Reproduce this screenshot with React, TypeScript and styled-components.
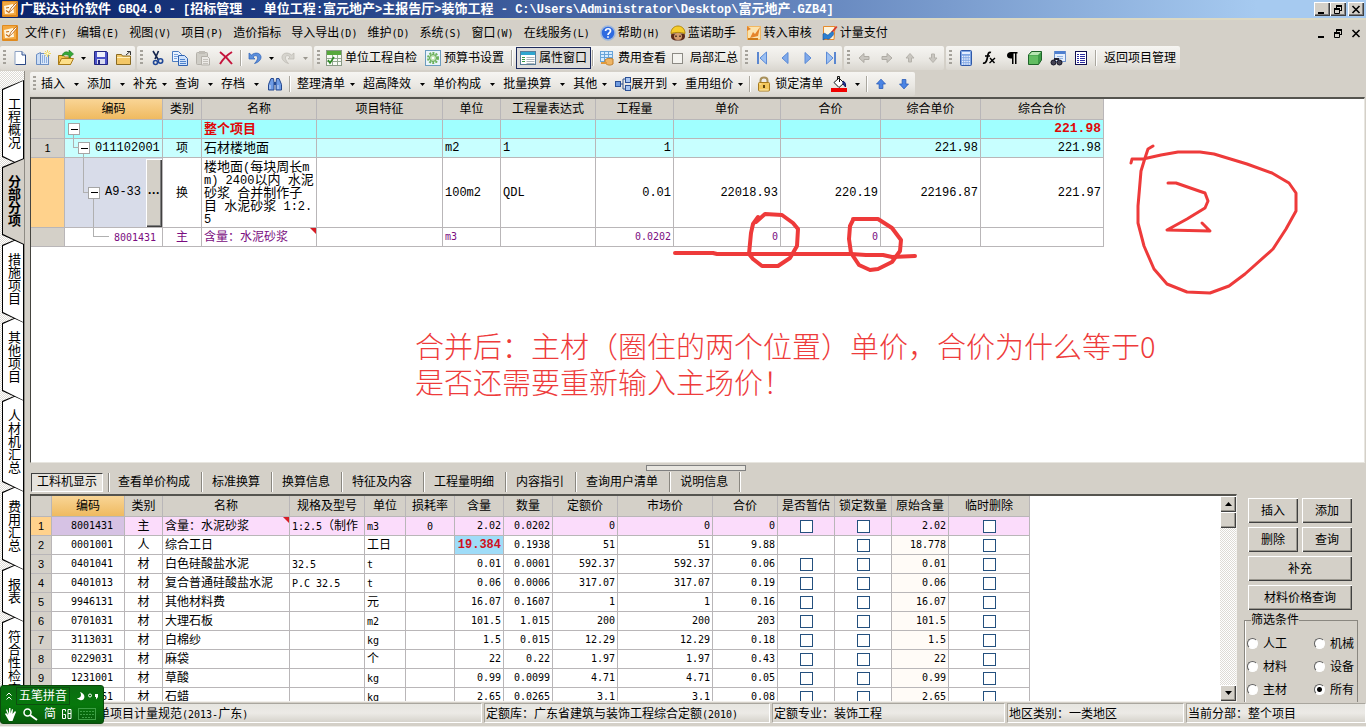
import React from 'react';
import styled, { createGlobalStyle, css } from 'styled-components';

const FACE = '#d4d0c8';
const LINE = '#b9b6b8';
const SANS = '"Liberation Sans", "Noto Sans CJK SC", sans-serif';
const MONO = '"Liberation Mono", "Noto Sans CJK SC", monospace';
const SMALL_MONO = '"DejaVu Sans Mono", "Noto Sans CJK SC", monospace';

const Global = createGlobalStyle`
  * { box-sizing: border-box; }
  body { margin: 0; background: ${FACE}; color: #000; font: 12px/16px ${SANS}; }
  button, input { font: inherit; color: inherit; margin: 0; padding: 0; }
  svg { display: block; flex: none; }
`;

/* ---------- text ---------- */

const Latin = styled.span<{ $size: number }>`
  font-family: ${p => (p.$size > 10 ? MONO : SMALL_MONO)};
  font-size: ${p => p.$size}px;
  line-height: 1px;
  white-space: pre;
`;

/* Sets the Latin runs of a mixed string in a half-width face. */
function Mix({ children, size = 10 }: { children: string; size?: number }) {
  const runs = children.match(/[\x20-\x7e]+|[^\x20-\x7e]+/g) || [];
  return (
    <>
      {runs.map((r, i) =>
        /^[\x20-\x7e]/.test(r) ? <Latin key={i} $size={size}>{r}</Latin> : <React.Fragment key={i}>{r}</React.Fragment>
      )}
    </>
  );
}

/* ---------- icons ---------- */

const Svg = ({ children, s = 16 }: { children: React.ReactNode; s?: number }) => (
  <svg width={s} height={s} viewBox="0 0 16 16" fill="none" aria-hidden="true">{children}</svg>
);

const icons: Record<string, React.ReactNode> = {
  app: (
    <Svg>
      <rect x="0" y="0" width="16" height="16" rx="1" fill="#e08a1e" />
      <rect x="1" y="1" width="13" height="13" fill="#f3a840" />
      <path d="M2 5l9-2 1 9-9 1z" fill="#fff6e0" />
      <path d="M4 7l3-.500M4 9.500l3 2" stroke="#c46a10" strokeWidth="1.200" />
      <path d="M14.500 1.500L9 7l-2 4.500 3.500-3L15 3z" fill="#fff" stroke="#b85f0c" strokeWidth=".8" />
    </Svg>
  ),
  page: (
    <Svg>
      <path d="M3 1.500h7l3.500 3.500v9.500H3z" fill="#fdfeff" stroke="#8ba0c2" />
      <path d="M10 1.500v3.500h3.500" fill="#d5e2f5" stroke="#36558f" />
      <path d="M13.500 5v9.500H4" stroke="#2d4a86" />
    </Svg>
  ),
  sheets: (
    <Svg>
      <path d="M1.500 4.500l4-2v12h-4z" fill="#c9dcf5" stroke="#6c8fc4" />
      <rect x="5.500" y="3.500" width="8" height="11" fill="#dbe8fa" stroke="#6c8fc4" />
      <path d="M7.500 5v8M9.500 5v8M11.500 7v6" stroke="#8fb0de" />
      <path d="M12.500 0v7M9 3.500h7M10 1l5 5M15 1l-5 5" stroke="#f1d860" />
      <rect x="11.500" y="2.500" width="2" height="2" fill="#fffbe0" />
    </Svg>
  ),
  open: (
    <Svg>
      <path d="M.500 5.500h5l1 1.500h6v7.500H.500z" fill="#f3c24e" stroke="#a97a16" />
      <path d="M.500 14.500l3-6h12l-3 6z" fill="#fde08a" stroke="#a97a16" />
      <path d="M4 6c1-4 4-5 7-3.500V0l4.500 4L11 8V5.500C8 4 6 5 4 6z" fill="#35a838" stroke="#1c7a22" strokeWidth=".6" />
    </Svg>
  ),
  save: (
    <Svg>
      <path d="M1.500 1.500h12l1 1v12h-13z" fill="#4b52c8" stroke="#23267f" />
      <rect x="4" y="2" width="8" height="5" fill="#eef0fb" />
      <rect x="4" y="9" width="8" height="5" fill="#d9dcf0" />
      <rect x="5" y="10" width="2" height="4" fill="#23267f" />
    </Svg>
  ),
  folderUp: (
    <Svg>
      <path d="M.500 4.500h5l1 1.500h8v8.500H.500z" fill="#f3c766" stroke="#8a6a22" />
      <path d="M1 7.500h13" stroke="#fff0bd" />
      <path d="M10 5l4-3.500M11 1.500h3.500V5" stroke="#333" />
    </Svg>
  ),
  cut: (
    <Svg>
      <path d="M4 1l5.500 9M9.500 1L6 9" stroke="#16264e" strokeWidth="1.600" />
      <circle cx="11.500" cy="11" r="2.200" stroke="#1f4797" strokeWidth="1.600" />
      <circle cx="6.500" cy="12.500" r="2" stroke="#1f4797" strokeWidth="1.600" />
    </Svg>
  ),
  copy: (
    <Svg>
      <path d="M.500 1.500h6l3 3v7h-9z" fill="#eaf3ff" stroke="#4d7cc0" />
      <path d="M2 4.500h4M2 6.500h4M2 8.500h3" stroke="#7ba3dd" />
      <path d="M6.500 5.500h6l3 3v7H6.500z" fill="#cfe2fb" stroke="#2f62b0" />
      <path d="M8 9.500h5M8 11.500h6M8 13.500h6" stroke="#4f83cc" />
    </Svg>
  ),
  paste: (
    <Svg>
      <rect x="1.500" y="2.500" width="11" height="12" rx="1" fill="#cfcdc6" stroke="#b4b1aa" />
      <rect x="4" y="1" width="6" height="3" fill="#bfbcb5" />
      <path d="M6.500 6.500h6l2 2v6.500h-8z" fill="#eceae6" stroke="#b4b1aa" />
      <path d="M8 9.500h5M8 11.500h5M8 13.500h5" stroke="#c4c1bb" />
    </Svg>
  ),
  remove: <Svg><path d="M2 2c4 3 8 7 12 12M14 2C9 5 5 9 2 14" stroke="#c5143c" strokeWidth="2" /></Svg>,
  undo: <Svg><path d="M2 3v6h6L6 7c2-2 4-1.500 4.500 0s-.5 4-3 6.500c4-1 7-4 6.500-7C13 2.500 8 2 4.500 5z" fill="#5b8fdc" stroke="#2f62b5" strokeWidth=".7" /></Svg>,
  redo: <Svg><path d="M14 3v6H8l2-2c-2-2-4-1.500-4.500 0s.5 4 3 6.500c-4-1-7-4-6.500-7C3 2.500 8 2 11.500 5z" fill="#d6d4ce" stroke="#bab7b0" strokeWidth=".7" /></Svg>,
  check: (
    <Svg>
      <rect x=".5" y=".5" width="15" height="15" fill="#f8fbf6" stroke="#8a9a86" />
      <rect x="1" y="1" width="14" height="4" fill="#56a83c" />
      <path d="M1 8.500h14M1 11.500h14M6.500 5v10M11.500 5v10" stroke="#93a890" />
      <path d="M2 10l2 3 4-6" stroke="#2c8a24" strokeWidth="1.600" />
    </Svg>
  ),
  gear: (
    <Svg>
      <rect x=".5" y=".5" width="15" height="15" fill="#e9f4fb" stroke="#6d9dbf" />
      <circle cx="8" cy="8" r="5" stroke="#6cb35b" strokeWidth="2" strokeDasharray="2 1.200" />
      <circle cx="8" cy="8" r="3.500" fill="#bfe4b2" stroke="#5ba24b" />
      <circle cx="8" cy="8" r="1.300" fill="#fff" />
    </Svg>
  ),
  props: (
    <Svg>
      <rect x=".5" y="1.500" width="15" height="13" fill="#fff" stroke="#5a7e9a" />
      <rect x="1" y="2" width="14" height="3" fill="#2fa6cf" />
      <path d="M2 7.500h3M2 9.500h3M2 11.500h3" stroke="#3c9a46" />
      <path d="M6.500 7.500h8M6.500 9.500h8M6.500 11.500h8M6.500 13.500h8" stroke="#aab4ba" />
    </Svg>
  ),
  fee: (
    <Svg>
      <rect x="1.500" y="1.500" width="12" height="10" fill="#d6ecff" stroke="#68a4d8" />
      <path d="M1.500 4.500h12M1.500 7.500h12M5.500 1.500v10M9.500 1.500v10" stroke="#68a4d8" />
      <path d="M6 10c2-2 5-2 8-1v5c-3 2-6 1-8-1z" fill="#eeb565" stroke="#c07f2c" />
      <path d="M2 13h6" stroke="#e09a3c" strokeWidth="2" />
    </Svg>
  ),
  first: <Svg><path d="M4 2v12" stroke="#5b87d0" strokeWidth="2" /><path d="M12.500 2v12L6 8z" fill="#9cc0f2" stroke="#5b8ad6" /></Svg>,
  prev: <Svg><path d="M11 2.500v11L5 8z" fill="#7fa9ea" stroke="#5b8ad6" /></Svg>,
  next: <Svg><path d="M5 2.500v11L11 8z" fill="#7fa9ea" stroke="#5b8ad6" /></Svg>,
  last: <Svg><path d="M12 2v12" stroke="#5b87d0" strokeWidth="2" /><path d="M3.500 2v12L10 8z" fill="#9cc0f2" stroke="#5b8ad6" /></Svg>,
  gLeft: <Svg><path d="M3 8l5-4.500v3h5v3H8v3z" fill="#c9c6c0" stroke="#aeaba4" /></Svg>,
  gRight: <Svg><path d="M13 8L8 3.500v3H3v3h5v3z" fill="#c9c6c0" stroke="#aeaba4" /></Svg>,
  gUp: <Svg><path d="M8 3.500L12 8H9.500v4h-3V8H4z" fill="#c9c6c0" stroke="#b5b2ab" /></Svg>,
  gDown: <Svg><path d="M8 12.500L4 8h2.500V4h3v4H12z" fill="#c9c6c0" stroke="#b5b2ab" /></Svg>,
  calc: (
    <Svg>
      <rect x="2.500" y=".5" width="11" height="15" rx="1" fill="#7fa6e4" stroke="#3059a8" />
      <rect x="4" y="2" width="8" height="2" fill="#e3eeff" />
      <path d="M4 6.500h8M4 9h8M4 11.500h8M4 14h8" stroke="#f4f8ff" strokeWidth="1.300" strokeDasharray="1.300 .9" />
    </Svg>
  ),
  fx: (
    <Svg>
      <path d="M10 2.500C7.500 1.500 7 4 6.500 7S5 14 2 13" stroke="#000" strokeWidth="1.700" />
      <path d="M4 6h5M9 8l4.500 5M14 8l-5.500 5" stroke="#000" strokeWidth="1.400" />
    </Svg>
  ),
  para: <Svg><path d="M7 2H13.500V3.500H12.500V14H11V3.500H9.500V14H8V8.500C5 9 3 7.500 3 5.500S4.500 2 7 2z" fill="#000" /></Svg>,
  cube: (
    <Svg>
      <path d="M1.500 5l3-3.500h10v8.500l-3 4.500h-10z" fill="#3d9c46" stroke="#1f6429" />
      <path d="M2 5l3-3h9l-3 3z" fill="#b7e6b2" />
      <rect x="2" y="5.500" width="9" height="8.500" fill="#62bd62" />
    </Svg>
  ),
  find: (
    <Svg>
      <rect x="4.500" y="1.500" width="11" height="10" fill="#e6f0fd" stroke="#6f93cc" />
      <rect x="5" y="1" width="10" height="3" fill="#4f80d0" />
      <path d="M7 6.500h6M7 8.500h6" stroke="#94b4e2" />
      <circle cx="3.500" cy="12.500" r="2.500" fill="#445" stroke="#112" />
      <circle cx="9.500" cy="12.500" r="2.500" fill="#445" stroke="#112" />
      <path d="M4 9h5" stroke="#223" strokeWidth="2" />
    </Svg>
  ),
  list: (
    <Svg>
      <rect x="2.500" y="1.500" width="11" height="13" fill="#fff" stroke="#101050" />
      <path d="M4 4.500h2M4 6.500h2M4 8.500h2M4 10.500h2M4 12.500h2M7 4.500h5M7 6.500h5M7 8.500h5M7 10.500h5M7 12.500h5" stroke="#2a2aa0" />
    </Svg>
  ),
  binoc: (
    <Svg>
      <path d="M4 2.500h2.500l.5 4v7.500H1.500V8.500zM9.500 2.500H12l2.500 6V14H9V6.500z" fill="#6e9be4" stroke="#26498f" />
      <path d="M7 6h2v3H7z" fill="#26498f" />
      <path d="M3 9v4M11 9v4" stroke="#cfe0fb" />
    </Svg>
  ),
  expand: (
    <Svg>
      <path d="M5 8h3M8 3v10M8 3h3M8 13h3" stroke="#35558c" />
      <rect x=".5" y="5.500" width="5" height="5" fill="#6f9be0" stroke="#2b5096" />
      <rect x="10.500" y="1.500" width="5" height="5" fill="#a9c6f1" stroke="#2b5096" />
      <rect x="10.500" y="9.500" width="5" height="5" fill="#a9c6f1" stroke="#2b5096" />
    </Svg>
  ),
  lock: (
    <Svg>
      <path d="M4.500 8V4.500c0-4 7-4 7 0V8" stroke="#a8905a" strokeWidth="2" />
      <rect x="2.500" y="6.500" width="11" height="8.500" rx="1" fill="#f2c75c" stroke="#a87a1c" />
      <path d="M8 9v3" stroke="#5c420c" strokeWidth="2" />
      <path d="M3.500 8h2M3.500 14h9" stroke="#fdebb0" />
    </Svg>
  ),
  paint: (
    <Svg>
      <path d="M3 6.500L8 2l5 5-5 4.500z" fill="#fff" stroke="#111" />
      <path d="M6.500 4V.500h2V6" stroke="#111" />
      <path d="M12 5c2 1 3 3 2.500 6L12 8z" fill="#27399a" stroke="#101c66" />
      <rect x="0" y="12" width="16" height="4" fill="#f00000" />
    </Svg>
  ),
  up: <Svg s={12}><path d="M8 1.500L14 8h-3.500V14h-5V8H2z" fill="#4a84e4" stroke="#2355b4" /></Svg>,
  down: <Svg s={12}><path d="M8 14.500L2 8h3.500V2h5v6H14z" fill="#4a84e4" stroke="#2355b4" /></Svg>,
  help: (
    <Svg>
      <circle cx="8" cy="8" r="7" fill="#2f6be0" stroke="#9fb8dc" strokeWidth="1.500" />
      <path d="M5.500 6c.3-3 5-3 5 0 0 1.800-2.500 2-2.500 4M8 11.300v1.500" stroke="#fff" strokeWidth="1.700" />
    </Svg>
  ),
  worker: (
    <Svg>
      <path d="M1.500 8.500C0 13 2 15 5.500 15.500h5c3.500-.5 5.500-2.500 4-7z" fill="#5d2a1a" />
      <ellipse cx="8" cy="11.500" rx="4" ry="3.500" fill="#d39a6c" />
      <path d="M1 8.500c0-10 14-10 14 0-4-1.500-10-1.500-14 0z" fill="#f5cc2c" stroke="#b58a0c" />
      <path d="M6 10.500v1.500M10 10.500v1.500" stroke="#22110a" strokeWidth="1.300" />
    </Svg>
  ),
  transfer: (
    <Svg>
      <rect x="1.500" y="1.500" width="13" height="13" fill="#fbe3ae" stroke="#f3b860" />
      <path d="M1 1l4 3-4 2zM4 13l3-6 2 2 5-7-2 9-4 1z" fill="#e5852a" />
      <path d="M2 14h10" stroke="#cf7b17" strokeWidth="2" />
    </Svg>
  ),
  pay: (
    <Svg>
      <path d="M1.500 1.500H13l-1 13H1.500z" fill="#fdf4dd" stroke="#e58a2c" />
      <path d="M9 7l5-6 1.500 1-5 6z" fill="#d93a2b" />
      <path d="M1 9c2-2 3 1 5 1 2-1 3-4 5-3 2 2-1 5-4 7-2 1-2-2-6 1z" fill="#2c7fd0" stroke="#174f94" strokeWidth=".6" />
    </Svg>
  ),
};

const Glyph = ({ kind }: { kind: 'min' | 'restore' | 'close' }) => (
  <svg width="10" height="9" viewBox="0 0 10 9" fill="none" stroke="#000" aria-hidden="true">
    {kind === 'min' && <path d="M1 8h6" strokeWidth="2" />}
    {kind === 'restore' && (
      <>
        <path d="M3 1h6M1 4h6" strokeWidth="2" />
        <path d="M3.500 1v2M8.500 1v5M7 5.500h2M1.500 4v4.500h5V4" />
      </>
    )}
    {kind === 'close' && <path d="M1.500 1l7 7M8.500 1l-7 7" strokeWidth="1.600" />}
  </svg>
);

/* ---------- window chrome ---------- */

const Window = styled.div`
  display: flex;
  flex-direction: column;
  height: 100vh;
  overflow: hidden;
  position: relative;
`;

const TitleBar = styled.header`
  display: flex;
  align-items: center;
  height: 18px;
  padding: 0 2px;
  background: linear-gradient(90deg, #0a246a 0%, #1c3a80 20%, #6384bc 58%, #a6caf0 92%);
`;

const Title = styled.h1`
  flex: 1;
  margin: 0 0 0 2px;
  color: #fff;
  font-size: 13px;
  line-height: 18px;
  white-space: nowrap;
`;

const WinButtons = styled.div`
  display: flex;
`;

const WinButton = styled.button<{ $flat?: boolean; $apart?: boolean }>`
  display: flex;
  align-items: center;
  justify-content: center;
  width: 16px;
  height: 14px;
  margin-left: ${p => (p.$apart ? 2 : 0)}px;
  background: ${FACE};
  border: 0;
  ${p => !p.$flat && css`box-shadow: inset 1px 1px #fff, inset -1px -1px #404040, inset -2px -2px #808080;`}
`;

const WindowControls = ({ flat }: { flat?: boolean }) => (
  <WinButtons>
    <WinButton $flat={flat} aria-label="最小化"><Glyph kind="min" /></WinButton>
    <WinButton $flat={flat} aria-label="还原"><Glyph kind="restore" /></WinButton>
    <WinButton $flat={flat} $apart aria-label="关闭"><Glyph kind="close" /></WinButton>
  </WinButtons>
);

const MenuBar = styled.nav`
  display: flex;
  align-items: center;
  height: 28px;
  padding: 0 2px;
  border-top: 2px solid #dcd9c4;
`;

const MenuItems = styled.div`
  display: flex;
  flex: 1;
  padding-left: 2px;
`;

const MenuItem = styled.button`
  display: flex;
  align-items: center;
  gap: 2px;
  height: 20px;
  padding: 0 5px;
  background: none;
  border: 0;
  white-space: nowrap;
`;

/* ---------- tool bars ---------- */

const ToolRow = styled.div<{ $second?: boolean }>`
  display: flex;
  flex: none;
  height: 25px;
  gap: 2px;
  ${p => p.$second && css`height: 26px; padding: 1px 0 0 5px;`}
`;

const ToolGroup = styled.div`
  display: flex;
  align-items: center;
  height: 24px;
  background: linear-gradient(#f6f5f2, #e9e7e2 60%, #dad7d0);
  border-radius: 2px;
`;

const Grip = styled.span`
  width: 3px;
  height: 16px;
  margin: 0 2px 0 3px;
  background: repeating-linear-gradient(#a5a29b 0 2px, transparent 2px 4px);
`;

const Tool = styled.button<{ $w?: number; $on?: boolean }>`
  display: flex;
  align-items: center;
  justify-content: ${p => (p.$w ? 'center' : 'flex-start')};
  gap: 3px;
  height: 22px;
  width: ${p => (p.$w ? p.$w + 'px' : 'auto')};
  padding: 0 ${p => (p.$w ? 0 : 4)}px;
  background: none;
  border: 0;
  white-space: nowrap;
  ${p => p.$on && css`
    padding: 0 3px;
    background: #dddcdb;
    border: 1px solid #1c2a5c;
  `}
`;

const DropTool = styled(Tool)<{ $tight?: boolean }>`
  padding: 0 0 0 3px;
  gap: ${p => (p.$tight ? 0 : 4)}px;
`;

const Divider = styled.span<{ $narrow?: boolean }>`
  width: 2px;
  height: 16px;
  margin: 0 ${p => (p.$narrow ? 1 : 3)}px;
  border-left: 1px solid #aaa79f;
  border-right: 1px solid #fff;
`;

const CaretBox = styled.span<{ $w: number; $dim?: boolean }>`
  display: flex;
  justify-content: center;
  width: ${p => p.$w}px;
  color: ${p => (p.$dim ? '#9a978f' : '#000')};
`;

const Caret = ({ w = 15, dim }: { w?: number; dim?: boolean }) => (
  <CaretBox $w={w} $dim={dim}>
    <svg width="5" height="3" viewBox="0 0 5 3" aria-hidden="true"><path d="M0 0h5L2.500 3z" fill="currentColor" /></svg>
  </CaretBox>
);

const CheckLabel = styled.label`
  display: flex;
  align-items: center;
  gap: 7px;
  padding: 0 2px;
`;

const Tick = styled.input<{ $plain?: boolean }>`
  appearance: none;
  display: block;
  width: 13px;
  height: 13px;
  margin: 0 auto;
  background: #fff;
  border: 1px solid #24507e;
  ${p => p.$plain && css`width: 11px; height: 11px; margin: 0; border-color: #8c8a84; background: #f4f3ef;`}
`;

const IconTool = ({ name, w = 23 }: { name: string; w?: number }) => (
  <Tool $w={w} aria-label={name}>{icons[name]}</Tool>
);

const Drop = ({ label, tight }: { label: string; tight?: boolean }) => (
  <DropTool $tight={tight}>{label}<Caret /></DropTool>
);

/* ---------- left page tabs ---------- */

const Body = styled.div`
  display: flex;
  flex: 1;
  min-height: 0;
`;

const Strip = styled.nav`
  flex: none;
  width: 25px;
  padding: 9px 1px 0 2px;
  overflow: hidden;
  background: repeating-conic-gradient(#fff 0 25%, #dedbd5 0 50%) 0 0 / 2px 2px;
  border-right: 1px solid #8e8b84;
`;

const PageTab = styled.button<{ $z: number; $on?: boolean }>`
  position: relative;
  z-index: ${p => (p.$on ? 20 : p.$z)};
  display: block;
  width: 22px;
  margin-bottom: -9px;
  padding: 17px 0 18px;
  border: 0;
  background: #000;
  clip-path: polygon(0 9px, 100% 0, 100% 100%, 0 calc(100% - 10px));
  &::before {
    content: '';
    position: absolute;
    inset: 1px ${p => (p.$on ? 0 : 1)}px 1px 1px;
    background: ${p => (p.$on ? FACE : '#fff')};
    clip-path: polygon(0 9px, 100% 0, 100% 100%, 0 calc(100% - 10px));
  }
  span {
    position: relative;
    display: block;
    writing-mode: vertical-rl;
    margin: 0 auto;
    width: 22px;
    font-size: 13px;
    line-height: 22px;
    font-weight: ${p => (p.$on ? 700 : 400)};
  }
`;

/* ---------- work area ---------- */

const Main = styled.main`
  display: flex;
  flex-direction: column;
  flex: 1;
  min-width: 0;
`;

const UpperPane = styled.section`
  position: relative;
  flex: 1;
  min-height: 0;
  margin: 0 1px 0 5px;
  overflow: hidden;
  background: #fff;
  border: 1px solid #45443f;
  border-top-width: 2px;
  border-top-color: #55544f;
  border-right-color: #e8e6e0;
  border-bottom-color: #e8e6e0;
`;

const Grid = styled.table`
  table-layout: fixed;
  width: 0;
  border-spacing: 0;
  th, td {
    height: 19px;
    padding: 0 2px;
    border-right: 1px solid ${LINE};
    border-bottom: 1px solid ${LINE};
    overflow: hidden;
    white-space: nowrap;
    line-height: 16px;
    text-align: left;
    font-weight: 400;
  }
  thead th {
    height: 21px;
    padding: 0;
    background: ${FACE};
    text-align: center;
  }
  thead th.hot { background: linear-gradient(#f9d596, #efba60); }
`;

const Row = styled.tr<{ $bg?: string; $ink?: string; $tall?: boolean }>`
  color: ${p => p.$ink || '#000'};
  background: ${p => p.$bg || '#fff'};
  ${p => p.$tall && css`td, th { height: 70px !important; }`}
`;

const NumHead = styled.th<{ $hot?: boolean }>`
  && { text-align: center; font-size: 11px; background: ${p => (p.$hot ? '#ffd28c' : FACE)}; color: #000; }
`;

const Cell = styled.td<{ $align?: string; $size?: number; $bold?: boolean; $bg?: string; $flag?: boolean; $font?: string }>`
  && {
    position: relative;
    text-align: ${p => p.$align || 'left'};
    font-size: ${p => p.$size || 12}px;
    font-weight: ${p => (p.$bold ? 700 : 400)};
    background: ${p => p.$bg || 'transparent'};
    font-family: ${p => p.$font || SANS};
  }
  ${p => p.$flag && css`
    &::after {
      content: '';
      position: absolute;
      top: 0;
      right: 0;
      border: 3px solid #d81c24;
      border-left-color: transparent;
      border-bottom-color: transparent;
    }
  `}
`;

const CodeCell = styled.td<{ $indent: number; $bg?: string }>`
  && {
    position: relative;
    padding: 0 0 0 ${p => p.$indent}px;
    background: ${p => p.$bg || 'transparent'};
  }
`;

const CodeLine = styled.div`
  display: flex;
  align-items: center;
  gap: 5px;
`;

const Toggle = styled.button`
  display: flex;
  align-items: center;
  justify-content: center;
  flex: none;
  width: 12px;
  height: 12px;
  background: #fff;
  border: 1px solid #a5a5a5;
  &::before { content: ''; width: 7px; height: 1px; background: #000; }
`;

const Elbow = styled.span<{ $x: number; $w: number }>`
  position: absolute;
  top: 0;
  left: ${p => p.$x}px;
  width: ${p => p.$w}px;
  height: 50%;
  border-left: 1px solid #b0b0b0;
  border-bottom: 1px solid #b0b0b0;
`;

const Stem = styled.span<{ $x: number }>`
  position: absolute;
  top: calc(50% + 6px);
  bottom: 0;
  left: ${p => p.$x}px;
  border-left: 1px solid #b0b0b0;
`;

const MoreButton = styled.button`
  position: absolute;
  top: 1px;
  right: 0;
  bottom: 0;
  width: 16px;
  background: ${FACE};
  border: 0;
  font-weight: 700;
  box-shadow: inset 1px 1px #fff, inset -1px -1px #404040, inset -2px -2px #808080;
`;

const NameLines = styled.div`
  font-size: 13px;
  line-height: 13px;
  white-space: nowrap;
`;

const Marks = styled.svg`
  position: absolute;
  top: 0;
  left: 0;
  pointer-events: none;
`;

const Note = styled.p`
  position: absolute;
  top: 228px;
  left: 384px;
  margin: 0;
  color: #ee3b3b;
  font: 300 29px/36px "Noto Sans CJK SC", sans-serif;
  white-space: nowrap;
`;

const Splitter = styled.div`
  display: flex;
  justify-content: center;
  flex: none;
  height: 9px;
  padding-top: 2px;
  span {
    width: 100px;
    height: 6px;
    background: #e8e6e0;
    border: 1px solid #808080;
  }
`;

const DetailTabs = styled.div`
  display: flex;
  align-items: center;
  flex: none;
  height: 22px;
  padding: 0 0 2px 6px;
`;

const DetailTab = styled.button<{ $on?: boolean }>`
  height: 20px;
  padding: 0 11px 0 10px;
  background: none;
  border: 0;
  border-right: 1px solid #8a8780;
  box-shadow: 1px 0 #fff;
  white-space: nowrap;
  ${p => p.$on && css`
    height: 19px;
    padding: 0 5px;
    margin-right: 5px;
    background: #e6e3dd;
    border: 1px solid #404040;
    border-right-color: #fff;
    border-bottom-color: #fff;
    box-shadow: 5px 0 ${FACE}, 6px 0 #8a8780, 7px 0 #fff;
  `}
`;

const Lower = styled.section`
  display: flex;
  flex: none;
  height: 208px;
  padding-left: 5px;
`;

const LowerGrid = styled.div`
  display: flex;
  flex: 1;
  min-width: 0;
  background: #fff;
  border: 1px solid #45443f;
  border-top: 2px solid #55544f;
  border-right-color: #f2f0ec;
  border-bottom-color: #f2f0ec;
`;

const GridPort = styled.div`
  flex: 1;
  min-width: 0;
  overflow: hidden;
`;

const ScrollBar = styled.div`
  display: flex;
  flex-direction: column;
  justify-content: space-between;
  flex: none;
  width: 16px;
  background: repeating-conic-gradient(#fff 0 25%, #dedbd5 0 50%) 0 0 / 2px 2px;
`;

const raised = css`
  background: ${FACE};
  border: 0;
  box-shadow: inset 1px 1px #fff, inset -1px -1px #404040, inset -2px -2px #9a978f;
`;

const ScrollPart = styled.button`
  ${raised}
  display: flex;
  align-items: center;
  justify-content: center;
  width: 16px;
  height: 16px;
`;

const Side = styled.aside`
  flex: none;
  width: 129px;
  padding: 4px 8px 0 7px;
  overflow: hidden;
`;

const PushGrid = styled.div`
  display: grid;
  grid-template-columns: 1fr 1fr;
  gap: 4px;
  padding: 0 6px 0 4px;
`;

const Push = styled.button<{ $wide?: boolean }>`
  ${raised}
  height: 25px;
  ${p => p.$wide && css`grid-column: span 2;`}
`;

const Filter = styled.fieldset`
  display: grid;
  grid-template-columns: 67px 1fr;
  grid-auto-rows: 23px;
  align-items: center;
  height: 100px;
  align-content: start;
  margin: 2px 0 0;
  padding: 4px 0 0;
  border: 1px solid #8a8780;
  box-shadow: inset 1px 0 #fff;
  legend { margin-left: 6px; padding: 0; line-height: 16px; }
`;

const RadioLabel = styled.label`
  display: flex;
  align-items: center;
  gap: 5px;
  padding-left: 2px;
`;

const Radio = styled.input`
  appearance: none;
  width: 11px;
  height: 11px;
  border-radius: 50%;
  border: 1px solid #606060;
  border-right-color: #fff;
  border-bottom-color: #fff;
  background: #fff;
  &:checked { background: radial-gradient(circle, #000 0 2px, #fff 3px); }
`;

const StatusBar = styled.footer`
  display: grid;
  grid-template-columns: 482fr 286fr 233fr 177fr 180fr;
  gap: 2px;
  flex: none;
  height: 25px;
  padding: 1px 0 3px;
  border-bottom: 1px solid #eeece8;
`;

const StatusCell = styled.div`
  padding-left: 1px;
  line-height: 20px;
  overflow: hidden;
  white-space: nowrap;
  background: linear-gradient(#e6e5e0, #eceae6 50%, #d6d3cc);
  border: 1px solid #a9a69e;
  border-right-color: #fff;
  border-bottom-color: #fff;
`;

/* ---------- input method bar ---------- */

const ImeBar = styled.div`
  position: absolute;
  left: 0;
  bottom: 3px;
  z-index: 30;
  width: 104px;
  height: 39px;
  padding: 1px 4px;
  color: #fff;
  background: linear-gradient(#0b6b12, #07780c 50%, #065a0a);
  border: 1px solid #0a4a0c;
  border-radius: 3px;
  white-space: nowrap;
`;

const ImeRow = styled.div<{ $tight?: boolean }>`
  display: flex;
  align-items: center;
  gap: ${p => (p.$tight ? 3 : 6)}px;
  height: 18px;
`;

const ImeName = styled.span`
  padding: 0 2px;
  margin-right: 3px;
  border: 1px solid #0d4f10;
  line-height: 16px;
`;

const Ime = () => (
  <ImeBar>
    <ImeRow $tight>
      <svg width="8" height="10" viewBox="0 0 8 10" fill="none" stroke="#fff" aria-hidden="true"><path d="M1.500 4.500L4 2l2.500 2.500M1.500 8.500L4 6l2.500 2.500" /></svg>
      <ImeName>五笔拼音</ImeName>
      <svg width="9" height="10" viewBox="0 0 9 10" aria-hidden="true"><path d="M4 1c2 3 1 6-3 6 3 4 9 2 7-3C7 2.500 6 1.500 4 1z" fill="#fff" /></svg>
      <svg width="11" height="10" viewBox="0 0 11 10" fill="none" aria-hidden="true"><circle cx="2" cy="4.500" r="1.500" stroke="#fff" /><path d="M7 3h3v3L8 8.500V6H7z" fill="#fff" /></svg>
    </ImeRow>
    <ImeRow>
      <svg width="12" height="13" viewBox="0 0 12 13" aria-hidden="true"><path d="M2 1l2 5V0h1.500v5.500L7 1l1 .5L7.500 6 10 3l1 1-2 5-1.500 4H4L0 6l1-1 2 2L1 2z" fill="#fff" /></svg>
      <svg width="15" height="13" viewBox="0 0 15 13" fill="none" stroke="#fff" aria-hidden="true"><circle cx="4.500" cy="4.500" r="3.500" strokeWidth="1.500" /><path d="M7 7l7 5" strokeWidth="2" /></svg>
      <span>简</span>
      <svg width="10" height="12" viewBox="0 0 10 12" fill="none" stroke="#fff" aria-hidden="true"><path d="M3.500 1.500h-3v9h3v-4h-2M3.500 1.500v2M6 1.500h3v9H6zM6 5.500h3" /></svg>
      <svg width="18" height="12" viewBox="0 0 18 12" fill="none" stroke="#3da045" aria-hidden="true"><rect x=".5" y=".5" width="17" height="11" /><path d="M2 3.500h14M2 6.500h14M4 9.500h10" strokeDasharray="2 1" /></svg>
    </ImeRow>
  </ImeBar>
);

/* ---------- data ---------- */

const menus: [string, string?][] = [
  ['文件(F)'], ['编辑(E)'], ['视图(V)'], ['项目(P)'], ['造价指标'], ['导入导出(D)'], ['维护(D)'], ['系统(S)'], ['窗口(W)'],
  ['在线服务(L)'], ['帮助(H)', 'help'], ['蓝诺助手', 'worker'], ['转入审核', 'transfer'], ['计量支付', 'pay'],
];

const pageTabs = ['工程概况', '分部分项', '措施项目', '其他项目', '人材机汇总', '费用汇总', '报表', '符合性检查'];
const detailTabs = ['工料机显示', '查看单价构成', '标准换算', '换算信息', '特征及内容', '工程量明细', '内容指引', '查询用户清单', '说明信息'];

const upperCols: [string, number][] = [
  ['', 34], ['编码', 98], ['类别', 39], ['名称', 115], ['项目特征', 126], ['单位', 58], ['工程量表达式', 95], ['工程量', 78],
  ['单价', 107], ['合价', 100], ['综合单价', 100], ['综合合价', 123],
];

const lowerCols: [string, number][] = [
  ['', 21], ['编码', 73], ['类别', 38], ['名称', 127], ['规格及型号', 75], ['单位', 41], ['损耗率', 49], ['含量', 49], ['数量', 49],
  ['定额价', 65], ['市场价', 95], ['合价', 65], ['是否暂估', 57], ['锁定数量', 57], ['原始含量', 57], ['临时删除', 81],
];

const lowerRows = [
  ['8001431', '主', '含量：水泥砂浆', '1:2.5（制作', 'm3', '0', '2.02', '0.0202', '0', '0', '0', '2.02'],
  ['0001001', '人', '综合工日', '', '工日', '', '19.384', '0.1938', '51', '51', '9.88', '18.778'],
  ['0401041', '材', '白色硅酸盐水泥', '32.5', 't', '', '0.01', '0.0001', '592.37', '592.37', '0.06', '0.01'],
  ['0401013', '材', '复合普通硅酸盐水泥', 'P.C 32.5', 't', '', '0.06', '0.0006', '317.07', '317.07', '0.19', '0.06'],
  ['9946131', '材', '其他材料费', '', '元', '', '16.07', '0.1607', '1', '1', '0.16', '16.07'],
  ['0701031', '材', '大理石板', '', 'm2', '', '101.5', '1.015', '200', '200', '203', '101.5'],
  ['3113031', '材', '白棉纱', '', 'kg', '', '1.5', '0.015', '12.29', '12.29', '0.18', '1.5'],
  ['0229031', '材', '麻袋', '', '个', '', '22', '0.22', '1.97', '1.97', '0.43', '22'],
  ['1231001', '材', '草酸', '', 'kg', '', '0.99', '0.0099', '4.71', '4.71', '0.05', '0.99'],
  ['1231061', '材', '石蜡', '', 'kg', '', '2.65', '0.0265', '3.1', '3.1', '0.08', '2.65'],
];

const GridHead = ({ cols }: { cols: [string, number][] }) => (
  <>
    <colgroup>{cols.map(([, w], i) => <col key={i} width={w} />)}</colgroup>
    <thead>
      <tr>{cols.map(([t], i) => <th key={i} className={i === 1 ? 'hot' : undefined} scope="col">{t}</th>)}</tr>
    </thead>
  </>
);

const Num = ({ children, size = 12, font = MONO, ...rest }: any) => (
  <Cell $align="right" $size={size} $font={font} {...rest}>{children}</Cell>
);

const Blank = ({ n }: { n: number }) => <>{Array.from({ length: n }, (_, i) => <Cell key={i} />)}</>;

const UpperTable = () => (
  <Grid>
    <GridHead cols={upperCols} />
    <tbody>
      <Row $bg="#a0ffff" $ink="#e00808">
        <NumHead />
        <CodeCell $indent={3}><Stem $x={8} /><Toggle aria-label="折叠" /></CodeCell>
        <Cell />
        <Cell $size={13} $bold>整个项目</Cell>
        <Blank n={7} />
        <Num size={13} $bold>221.98</Num>
      </Row>
      <Row $bg="#c8ffff">
        <NumHead scope="row">1</NumHead>
        <CodeCell $indent={13}>
          <Elbow $x={8} $w={6} /><Stem $x={18} />
          <CodeLine><Toggle aria-label="折叠" /><Latin $size={12}>011102001</Latin></CodeLine>
        </CodeCell>
        <Cell $align="center">项</Cell>
        <Cell $size={13}>石材楼地面</Cell>
        <Cell />
        <Cell $font={MONO}>m2</Cell>
        <Cell $font={MONO}>1</Cell>
        <Num>1</Num>
        <Blank n={2} />
        <Num>221.98</Num>
        <Num>221.98</Num>
      </Row>
      <Row $tall>
        <NumHead $hot />
        <CodeCell $indent={23} $bg="#d8dce9">
          <Elbow $x={18} $w={5} /><Stem $x={28} />
          <CodeLine><Toggle aria-label="折叠" /><Latin $size={12}>A9-33</Latin></CodeLine>
          <MoreButton aria-label="更多">···</MoreButton>
        </CodeCell>
        <Cell $align="center">换</Cell>
        <Cell>
          <NameLines>
            {['楼地面(每块周长m', 'm) 2400以内 水泥', '砂浆 合并制作子', '目 水泥砂浆 1:2.', '5'].map(t => (
              <div key={t}><Mix size={12}>{t}</Mix></div>
            ))}
          </NameLines>
        </Cell>
        <Cell />
        <Cell $font={MONO}>100m2</Cell>
        <Cell $font={MONO}>QDL</Cell>
        <Num>0.01</Num>
        <Num>22018.93</Num>
        <Num>220.19</Num>
        <Num>22196.87</Num>
        <Num>221.97</Num>
      </Row>
      <Row $ink="#7a0c80">
        <NumHead />
        <CodeCell $indent={49}><Elbow $x={28} $w={16} /><Latin $size={10}>8001431</Latin></CodeCell>
        <Cell $align="center">主</Cell>
        <Cell $flag>含量：水泥砂浆</Cell>
        <Cell />
        <Cell $size={10} $font={SMALL_MONO}>m3</Cell>
        <Cell />
        <Num size={10} font={SMALL_MONO}>0.0202</Num>
        <Num size={10} font={SMALL_MONO}>0</Num>
        <Num size={10} font={SMALL_MONO}>0</Num>
        <Blank n={2} />
      </Row>
    </tbody>
  </Grid>
);

const Changed = styled.strong`
  color: #d01020;
`;

const Code = styled.span`
  padding-left: 8px;
`;

const LowerTable = () => (
  <Grid>
    <GridHead cols={lowerCols} />
    <tbody>
      {lowerRows.map((r, i) => {
        const num = { size: 10, font: SMALL_MONO };
        const changed = r[6] === '19.384';
        return (
          <Row key={i} $bg={i === 0 ? '#fbdcfb' : '#fff'}>
            <NumHead $hot={i === 0} scope="row">{i + 1}</NumHead>
            <Cell $align="center" $size={10} $font={SMALL_MONO} $bg={i === 0 ? '#d6c2e4' : undefined}><Code>{r[0]}</Code></Cell>
            <Cell $align="center">{r[1]}</Cell>
            <Cell $flag={i === 0}>{r[2]}</Cell>
            <Cell><Mix>{r[3]}</Mix></Cell>
            <Cell><Mix>{r[4]}</Mix></Cell>
            <Cell $align="center"><Mix>{r[5]}</Mix></Cell>
            {changed ? <Num $bold $bg="#9fdcf8"><Changed>{r[6]}</Changed></Num> : <Num {...num}>{r[6]}</Num>}
            {r.slice(7, 11).map((v, k) => <Num key={k} {...num}>{v}</Num>)}
            <Cell>{i !== 1 && <Tick type="checkbox" aria-label="是否暂估" />}</Cell>
            <Cell><Tick type="checkbox" aria-label="锁定数量" /></Cell>
            <Num {...num} $bg={i === 0 ? undefined : '#fffbf7'}>{r[11]}</Num>
            <Cell><Tick type="checkbox" aria-label="临时删除" /></Cell>
          </Row>
        );
      })}
    </tbody>
  </Grid>
);

/* Red pen strokes over the upper grid. */
const PenMarks = () => (
  <Marks width="1300" height="220" viewBox="31 99 1300 220" fill="none" stroke="#ee3a3a" strokeWidth="4" strokeLinecap="round" strokeLinejoin="round" aria-hidden="true">
    <path d="M758 217L753 224 751 233 749 254 753 259 762 266 778 266 790 258 797 246 798 229 793 223 782 215 765 214 756 222" />
    <path d="M675 253H713L717 254H851L866 255H883L892 257 915 256" />
    <path d="M853 219H878L892 228 901 240 900 251 892 262 878 269 870 270 859 265 851 253 849 239 850 226 853 220" />
    <path d="M1153 146L1148 149 1145 158 1141 171 1138 206V223L1144 246 1154 269 1167 284 1187 292 1210 293 1229 286 1245 274 1273 249 1286 229 1296 211V193L1289 183 1272 173 1247 164 1214 154 1200 152 1178 152 1161 155 1143 159 1132 159 1131 163" strokeWidth="3" />
    <path d="M1168 183H1176L1199 191 1205 193 1208 201 1205 208 1187 219 1167 230 1210 231 1202 223" strokeWidth="3" />
  </Marks>
);

export default function App() {
  return (
    <Window>
      <Global />
      <TitleBar>
        {icons.app}
        <Title><Mix size={12}>{'广联达计价软件 GBQ4.0 - [招标管理 - 单位工程:富元地产>主报告厅>装饰工程 - C:\\Users\\Administrator\\Desktop\\富元地产.GZB4]'}</Mix></Title>
        <WindowControls />
      </TitleBar>
      <MenuBar>
        {icons.app}
        <MenuItems>
          {menus.map(([t, icon]) => <MenuItem key={t}>{icon && icons[icon]}<span><Mix>{t}</Mix></span></MenuItem>)}
        </MenuItems>
        <WindowControls flat />
      </MenuBar>

      <ToolRow>
        <ToolGroup>
          <Grip /><IconTool name="page" /><IconTool name="sheets" /><IconTool name="open" /><Caret w={12} />
          <IconTool name="save" /><IconTool name="folderUp" />
        </ToolGroup>
        <ToolGroup>
          <Grip /><IconTool name="cut" /><IconTool name="copy" /><IconTool name="paste" /><IconTool name="remove" /><Divider />
          <IconTool name="undo" w={19} /><Caret w={14} /><IconTool name="redo" w={20} /><Caret w={14} dim />
        </ToolGroup>
        <ToolGroup>
          <Grip />
          <Tool>{icons.check}单位工程自检</Tool>
          <Tool>{icons.gear}预算书设置</Tool>
          <Divider />
          <Tool $on>{icons.props}属性窗口</Tool>
          <Divider $narrow />
          <Tool>{icons.fee}费用查看</Tool>
          <CheckLabel><Tick $plain type="checkbox" />局部汇总</CheckLabel>
        </ToolGroup>
        <ToolGroup>
          <Grip /><IconTool name="first" /><IconTool name="prev" /><IconTool name="next" /><IconTool name="last" />
        </ToolGroup>
        <ToolGroup>
          <Grip /><IconTool name="gLeft" /><IconTool name="gRight" /><IconTool name="gUp" /><IconTool name="gDown" />
        </ToolGroup>
        <ToolGroup>
          <Grip /><IconTool name="calc" /><IconTool name="fx" /><IconTool name="para" /><IconTool name="cube" />
          <IconTool name="find" /><IconTool name="list" /><Divider /><Tool>返回项目管理</Tool>
        </ToolGroup>
      </ToolRow>

      <Body>
        <Strip>
          {pageTabs.map((t, i) => <PageTab key={t} $z={10 - i} $on={i === 1}><span>{t}</span></PageTab>)}
        </Strip>
        <Main>
          <ToolRow $second>
            <ToolGroup>
              <Grip />
              <Drop label="插入" /><Drop label="添加" /><Drop label="补充" tight /><Drop label="查询" /><Drop label="存档" />
              <IconTool name="binoc" w={22} /><Divider />
              <Drop label="整理清单" tight /><Drop label="超高降效" /><Drop label="单价构成" /><Drop label="批量换算" /><Drop label="其他" tight />
              <DropTool $tight>{icons.expand}展开到<Caret /></DropTool>
              <Drop label="重用组价" tight />
              <Divider $narrow />
              <Tool>{icons.lock}锁定清单</Tool>
              <IconTool name="paint" /><Caret /><Divider $narrow />
              <IconTool name="up" /><IconTool name="down" />
            </ToolGroup>
          </ToolRow>
          <UpperPane>
            <UpperTable />
            <PenMarks />
            <Note>合并后：主材（圈住的两个位置）单价，合价为什么等于0<br />是否还需要重新输入主场价！</Note>
          </UpperPane>
          <Splitter><span /></Splitter>
          <DetailTabs>
            {detailTabs.map((t, i) => <DetailTab key={t} $on={i === 0}>{t}</DetailTab>)}
          </DetailTabs>
          <Lower>
            <LowerGrid>
              <GridPort><LowerTable /></GridPort>
              <ScrollBar>
                <div>
                  <ScrollPart aria-label="向上"><svg width="7" height="4" viewBox="0 0 7 4" aria-hidden="true"><path d="M3.500 0L7 4H0z" /></svg></ScrollPart>
                  <ScrollPart as="div" />
                </div>
                <ScrollPart aria-label="向下"><svg width="7" height="4" viewBox="0 0 7 4" aria-hidden="true"><path d="M3.500 4L7 0H0z" /></svg></ScrollPart>
              </ScrollBar>
            </LowerGrid>
            <Side>
              <PushGrid>
                <Push>插入</Push><Push>添加</Push><Push>删除</Push><Push>查询</Push>
                <Push $wide>补充</Push><Push $wide>材料价格查询</Push>
              </PushGrid>
              <Filter>
                <legend>筛选条件</legend>
                {['人工', '机械', '材料', '设备', '主材', '所有'].map(t => (
                  <RadioLabel key={t}><Radio type="radio" name="filter" defaultChecked={t === '所有'} />{t}</RadioLabel>
                ))}
              </Filter>
            </Side>
          </Lower>
        </Main>
      </Body>

      <StatusBar>
        {['清单库：工程量清单项目计量规范(2013-广东)', '定额库：广东省建筑与装饰工程综合定额(2010)', '定额专业：装饰工程', '地区类别：一类地区', '当前分部：整个项目'].map(t => (
          <StatusCell key={t}><Mix>{t}</Mix></StatusCell>
        ))}
      </StatusBar>
      <Ime />
    </Window>
  );
}
